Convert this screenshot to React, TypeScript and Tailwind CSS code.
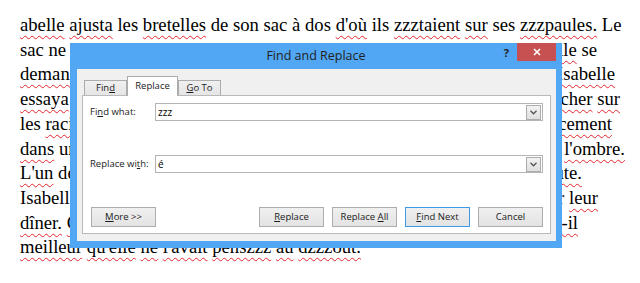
const squiggle =
  "underline decoration-wavy decoration-[#e5262b] decoration-1 underline-offset-[4px]";

// "~mot" = mot souligné en rouge (correcteur)
function Words({ s }: { s: string }) {
  return (
    <>
      {s.split(" ").map((w, i) => (
        <span key={i}>
          {i > 0 ? " " : ""}
          {w.startsWith("~") ? <span className={squiggle}>{w.slice(1)}</span> : w}
        </span>
      ))}
    </>
  );
}

const lines: { left: string; right?: string; w?: string }[] = [
  { left: "~abelle ~ajusta les ~bretelles de son sac à dos ~d'où ils ~zzztaient ~sur ses ~zzzpaules. Le" },
  { left: "sac ne ~pesait pas ~lourd, mais la ~route ~était ~longue et", right: "~Isabelle se", w: "w-[577px]" },
  { left: "~demanda ce ~qu'elle ~allait ~trouver. ~Soudain,", right: "~Isabelle", w: "w-[595px]" },
  { left: "~essaya de ne pas ~trébucher et de ne pas", right: "~trébucher ~sur", w: "w-[600px]" },
  { left: "les ~racines. ~Quelque ~chose ~bougeait", right: "~doucement", w: "w-[592px]" },
  { left: "~dans un ~buisson, ~caché ~dans", right: "~l'ombre.", w: "w-[605px]" },
  { left: "~L'un des ~oiseaux ~chantait, ~une note ~haute.", right: "~haute.", w: "w-[562px]" },
  { left: "Isabelle ~pensa ~aux ~amis qui ~attendaient", right: "pour ~leur", w: "w-[578px]" },
  { left: "~dîner. ~Comment ~serait le ~repas, ~serait", right: "~serait-il", w: "w-[558px]" },
  { left: "~meilleur ~qu'elle ~ne ~l'avait ~penszzz ~au ~dzzzout." },
];

function U({ children }: { children: string }) {
  return <span className="underline underline-offset-[1px]">{children}</span>;
}

function Btn({ children, primary }: { children: React.ReactNode; primary?: boolean }) {
  return (
    <div
      className={
        "flex h-[20px] w-[65px] items-center justify-center border bg-gradient-to-b from-[#f0f0f0] to-[#e3e3e3] text-[9.5px] text-[#1a1a1a] " +
        (primary ? "border-[#3c9ae8]" : "border-[#adadad]")
      }
    >
      <span className="whitespace-pre">{children}</span>
    </div>
  );
}

function Field({ label, value }: { label: React.ReactNode; value: string }) {
  return (
    <div className="flex h-[18px] items-center">
      <div className="w-[65px] text-[9.5px] text-[#1a1a1a]">{label}</div>
      <div className="flex h-full flex-1 items-center border border-[#b4b4b4] bg-white pl-[2px] pr-px">
        <span className="flex-1 text-[10px] text-black">{value}</span>
        <div className="flex h-[15px] w-[15px] items-center justify-center border border-[#acacac] bg-gradient-to-b from-[#f2f2f2] to-[#e0e0e0]">
          <svg width="7" height="5" viewBox="0 0 7 5">
            <path d="M0.5 0.8 L3.5 3.8 L6.5 0.8" fill="none" stroke="#555" strokeWidth="1.3" />
          </svg>
        </div>
      </div>
    </div>
  );
}

export default function App() {
  return (
    <div className="relative h-[283px] w-[640px] overflow-hidden bg-white">
      <div className="pl-[20px] pt-[13px] font-['Liberation_Serif',serif] text-[18.67px] leading-[24.7px] text-black">
        {lines.map((l, i) =>
          l.right ? (
            <div key={i} className={"flex justify-between whitespace-nowrap " + l.w}>
              <span>
                <Words s={l.left} />
              </span>
              <span>
                <Words s={l.right} />
              </span>
            </div>
          ) : (
            <div key={i} className="whitespace-nowrap">
              <Words s={l.left} />
            </div>
          )
        )}
      </div>

      {/* Boîte de dialogue */}
      <div className="absolute left-[70px] top-[43px] flex h-[205px] w-[492px] flex-col bg-[#51a7f4] font-['Open_Sans',sans-serif]">
        <div className="relative flex h-[26px] items-center justify-center">
          <span className="text-[12.5px] text-[#222]">Find and Replace</span>
          <div className="absolute right-[6px] top-0 flex items-start">
            <span className="mr-[8px] mt-[2px] text-[11px] font-bold text-[#222]">?</span>
            <div className="flex h-[18px] w-[39px] items-center justify-center bg-[#c75050]">
              <svg width="8" height="8" viewBox="0 0 8 8">
                <path d="M1 1 L7 7 M7 1 L1 7" stroke="white" strokeWidth="1.6" />
              </svg>
            </div>
          </div>
        </div>

        <div className="mb-[7px] ml-[7px] mr-[6px] flex flex-1 flex-col bg-[#f0f0f0] px-[5px] pb-[7px] pt-[7px]">
          <div className="flex h-[19px] items-end pl-[2px] text-[9.5px] text-[#1a1a1a]">
            <div className="flex h-[15px] w-[43px] items-center justify-center border border-b-0 border-[#acacac] bg-gradient-to-b from-[#f0f0f0] to-[#e5e5e5]">
              <span>
                Fin<U>d</U>
              </span>
            </div>
            <div className="relative z-10 -mb-px flex h-[20px] w-[51px] items-center justify-center border border-b-0 border-[#acacac] bg-white">
              Replace
            </div>
            <div className="flex h-[15px] w-[43px] items-center justify-center border border-b-0 border-[#acacac] bg-gradient-to-b from-[#f0f0f0] to-[#e5e5e5]">
              <span className="whitespace-pre">
                <U>G</U>o To
              </span>
            </div>
          </div>

          <div className="flex flex-1 flex-col border border-[#b9b9b9] bg-white px-[7px] pt-[7px]">
            <Field
              label={
                <>
                  Fi<U>n</U>d what:
                </>
              }
              value="zzz"
            />
            <div className="mt-[34px]">
              <Field
                label={
                  <>
                    Replace wi<U>t</U>h:
                  </>
                }
                value="é"
              />
            </div>
            <div className="mt-[34px] flex gap-[8px] pl-px">
              <Btn>
                <U>M</U>ore &gt;&gt;
              </Btn>
              <div className="flex-1" />
              <Btn>
                <U>R</U>eplace
              </Btn>
              <Btn>
                Replace <U>A</U>ll
              </Btn>
              <Btn primary>
                <U>F</U>ind Next
              </Btn>
              <Btn>Cancel</Btn>
            </div>
          </div>
        </div>
      </div>
    </div>
  );
}
